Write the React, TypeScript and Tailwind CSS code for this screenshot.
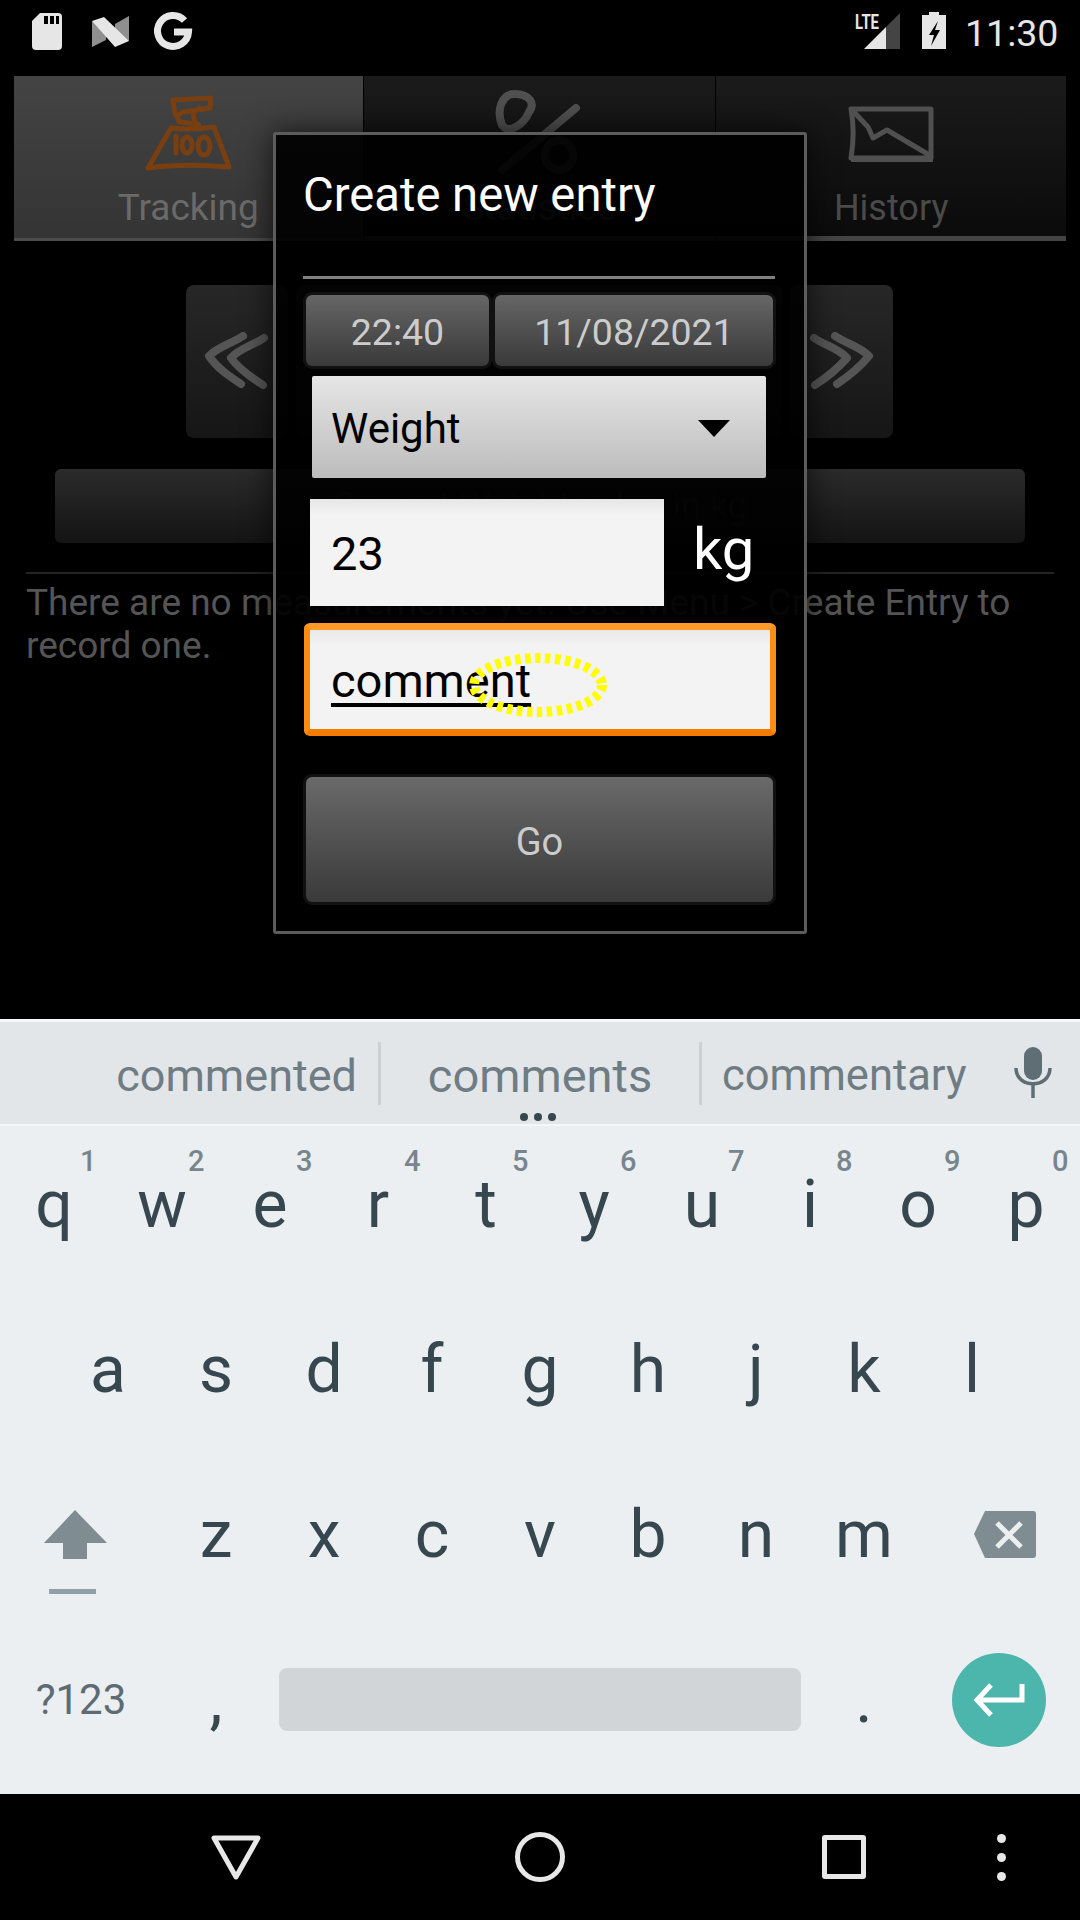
export default function App() {
  const row1 = ["q", "w", "e", "r", "t", "y", "u", "i", "o", "p"];
  const hints = ["1", "2", "3", "4", "5", "6", "7", "8", "9", "0"];
  const row2 = ["a", "s", "d", "f", "g", "h", "j", "k", "l"];
  const row3 = ["z", "x", "c", "v", "b", "n", "m"];

  return (
    <div className="relative w-[1080px] h-[1920px] bg-black overflow-hidden flex flex-col font-[Roboto,sans-serif]">
      {/* status bar */}
      <div className="h-[76px] flex shrink-0">
        <svg width="200" height="76" viewBox="0 0 200 76">
          <path d="M40 13H58a4 4 0 0 1 4 4V46a4 4 0 0 1-4 4H36a4 4 0 0 1-4-4V21Z" fill="#e6e6e6" />
          <path d="M44 16h4v8h-4zM50 16h4v8h-4zM56 16h3v8h-3z" fill="#000" />
          <path d="M92 21V47L106 40V31Z" fill="#8f8f8f" />
          <path d="M115 24L129 16V41L115 34Z" fill="#8f8f8f" />
          <path d="M92 21L104 17L129 41L115 47Z" fill="#e6e6e6" />
          <path d="M184.5 20.5A15.5 15.5 0 1 0 188.5 32H174" fill="none" stroke="#e6e6e6" strokeWidth="7" />
        </svg>
        <svg className="ml-auto" width="110" height="76" viewBox="850 0 110 76">
          <text x="855" y="29" fontSize="21" fontWeight="700" fill="#e6e6e6" textLength="24" lengthAdjust="spacingAndGlyphs">LTE</text>
          <path d="M864 49L886 27V49Z" fill="#e6e6e6" />
          <path d="M886 27L900 13V49H886Z" fill="#444" />
          <path d="M929 12H939V15H946V49H922V15H929Z" fill="#e6e6e6" />
          <path d="M938 21L929 35H934L931 46L940 30H935Z" fill="#000" />
        </svg>
        <span className="w-[120px] pl-[5px] pt-[12px] text-[37.5px] leading-[42px] text-[#e6e6e6]">11:30</span>
      </div>

      {/* tabs behind the dialog */}
      <div className="mx-[14px] h-[165px] flex shrink-0">
        <div className="w-[349px] bg-gradient-to-b from-[#444444] to-[#343434] border-b-[3px] border-[#4c4c4c] flex flex-col items-center">
          <svg className="mt-[14px]" width="95" height="85" viewBox="140 90 95 85" fill="none" stroke="#7a3f10" strokeWidth="5" strokeLinecap="round" strokeLinejoin="round">
            <path d="M172 100L210 98L209 108L182 112L176 116L178 122L197 124L199 129M172 100L174 114M198 108L192 113L194 123" />
            <path d="M170 128L147 168C175 164 205 165 228 167L213 127C200 129 185 130 170 128Z" />
            <path d="M175 136L175 153" />
            <ellipse cx="186" cy="145" rx="5" ry="8" />
            <ellipse cx="203" cy="146" rx="6" ry="9" />
          </svg>
          <span className="mt-[11px] text-[37px] leading-[44px] text-[#6a6a6a]">Tracking</span>
        </div>
        <div className="ml-[1px] w-[352px] bg-gradient-to-b from-[#1b1b1b] to-[#0b0b0b] border-b-[5px] border-[#444444] flex flex-col items-center">
          <svg className="mt-[14px]" width="95" height="85" viewBox="493 90 95 85" fill="none" stroke="#505050" strokeWidth="8" strokeLinecap="round" strokeLinejoin="round">
            <path d="M503 125C497 110 503 94 515 94C532 94 536 104 530 112C525 124 510 135 503 125Z" />
            <path d="M577 108L503 170" />
            <ellipse cx="560" cy="155" rx="14" ry="15" />
          </svg>
          <span className="mt-[11px] text-[37px] leading-[44px] text-[#4a4a4a]">Statistics</span>
        </div>
        <div className="ml-[1px] w-[350px] bg-gradient-to-b from-[#1b1b1b] to-[#0b0b0b] border-b-[5px] border-[#444444] flex flex-col items-center">
          <svg className="mt-[14px]" width="95" height="85" viewBox="844 90 95 85" fill="none" stroke="#505050" strokeWidth="5" strokeLinejoin="round">
            <path d="M851 109H931V158H851C854 140 854 125 851 109Z" />
            <path d="M853 111L868 127L873 138L887 130L931 156" />
            <path d="M851 159H933" strokeWidth="6" />
          </svg>
          <span className="mt-[11px] text-[36px] leading-[44px] text-[#4a4a4a]">History</span>
        </div>
      </div>

      {/* date navigation */}
      <div className="mt-[44px] ml-[186px] h-[153px] flex shrink-0">
        <div className="w-[102px] rounded-[8px] bg-gradient-to-b from-[#272727] to-[#161616] flex items-center justify-center">
          <svg width="72" height="60" viewBox="0 0 72 60" fill="none" stroke="#555555" strokeWidth="8" strokeLinecap="round" strokeLinejoin="round">
            <path d="M42 4C30 12 18 14 8 24C16 36 28 44 40 52" />
            <path d="M63 6C51 14 39 16 30 26C37 36 51 46 62 53" />
          </svg>
        </div>
        <div className="ml-[8px] w-[486px] rounded-[8px] bg-gradient-to-b from-[#272727] to-[#161616]" />
        <div className="ml-[8px] w-[103px] rounded-[8px] bg-gradient-to-b from-[#272727] to-[#161616] flex items-center justify-center">
          <svg width="72" height="60" viewBox="0 0 72 60" fill="none" stroke="#555555" strokeWidth="8" strokeLinecap="round" strokeLinejoin="round">
            <path d="M8 6C20 14 32 16 41 26C32 36 20 46 9 53" />
            <path d="M29 4C41 12 53 14 63 24C53 36 43 44 31 52" />
          </svg>
        </div>
      </div>

      <div className="mt-[31px] mx-[55px] h-[74px] rounded-[6px] bg-gradient-to-b from-[#2b2b2b] to-[#141414] flex items-center justify-center text-[36px] text-[#333333] shrink-0">
        Current Weight value in kg
      </div>

      <div className="mt-[29px] mx-[26px] h-[2px] bg-[#242424] shrink-0" />
      <p className="mt-[7px] mx-[26px] text-[37px] leading-[43px] text-[#555555]">
        There are no measurements yet. Use Menu &gt; Create Entry to record one.
      </p>

      {/* keyboard */}
      <div className="mt-auto shrink-0 h-[775px] flex flex-col bg-[#eceff1]">
        <div className="h-[105px] border-t-[3px] border-[#f7f8f9] bg-[#e2e6e9] relative flex items-center shrink-0">
          <span className="w-[378px] pr-[21px] pt-[6px] text-right text-[45px] text-[#6f7c83]">commented</span>
          <span className="w-[3px] h-[63px] bg-[#ccd0d3]" />
          <span className="w-[318px] pt-[6px] text-center text-[47px] text-[#6f7c83]">comments</span>
          <span className="w-[3px] h-[63px] bg-[#ccd0d3]" />
          <span className="ml-[20px] pt-[6px] text-[43.5px] text-[#6f7c83]">commentary</span>
          <svg className="ml-[46px]" width="40" height="52" viewBox="0 0 40 52" fill="none">
            <rect x="11" y="0" width="18" height="33" rx="9" fill="#5f6d75" />
            <path d="M3 21C3 42 37 42 37 21M20 36V51" stroke="#5f6d75" strokeWidth="3.5" />
          </svg>
          <div className="absolute left-[520px] bottom-[3px] flex gap-[6px]">
            <span className="w-[8px] h-[8px] rounded-full bg-[#37474f]" />
            <span className="w-[8px] h-[8px] rounded-full bg-[#37474f]" />
            <span className="w-[8px] h-[8px] rounded-full bg-[#37474f]" />
          </div>
        </div>
        <div className="h-[3px] -mt-[1px] bg-[#f4f6f7] shrink-0" />
        <div className="-mt-[4px] flex-1 flex flex-col text-[#37474f] text-[66px]">
          <div className="h-[165px] flex">
            {row1.map((k, i) => (
              <div key={k} className="relative w-[108px] flex items-center justify-center">
                {k}
                <span className="absolute left-[80px] top-[22px] text-[29px] leading-[34px] font-medium text-[#78858c]">{hints[i]}</span>
              </div>
            ))}
          </div>
          <div className="h-[165px] flex pl-[54px]">
            {row2.map((k) => (
              <div key={k} className="w-[108px] flex items-center justify-center">{k}</div>
            ))}
          </div>
          <div className="h-[165px] flex">
            <div className="w-[162px] flex items-start">
              <svg className="ml-[30px] mt-[58px]" width="120" height="100" viewBox="30 1510 120 100">
                <path d="M75 1510L107 1543H87V1559H63V1543H44Z" fill="#7f8c91" />
                <path d="M49 1589H96V1594H49Z" fill="#90a0a8" />
              </svg>
            </div>
            {row3.map((k) => (
              <div key={k} className="w-[108px] flex items-center justify-center">{k}</div>
            ))}
            <div className="w-[162px] flex items-center pl-[56px]">
              <svg width="62" height="47" viewBox="974 1511 62 47">
                <path d="M985 1511H1033a3 3 0 0 1 3 3V1555a3 3 0 0 1-3 3H985L974 1534Z" fill="#7f8c91" />
                <path d="M997 1523L1021 1547M1021 1523L997 1547" stroke="#eceff1" strokeWidth="5" />
              </svg>
            </div>
          </div>
          <div className="h-[165px] flex items-center">
            <div className="w-[162px] text-center text-[42px] text-[#5d6c74]">?123</div>
            <div className="w-[108px] text-center">,</div>
            <div className="w-[540px] px-[9px]">
              <div className="h-[63px] rounded-[8px] bg-[#d1d5d8]" />
            </div>
            <div className="w-[108px] text-center">.</div>
            <div className="w-[162px] flex justify-center">
              <div className="w-[94px] h-[94px] rounded-full bg-[#4db6ac] flex items-center justify-center">
                <svg width="56" height="36" viewBox="0 0 56 36" fill="none" stroke="#ffffff" strokeWidth="5">
                  <path d="M51 2V18H6M20 3L6 18L20 33" />
                </svg>
              </div>
            </div>
          </div>
        </div>
      </div>

      {/* navigation bar */}
      <div className="h-[126px] bg-black shrink-0 flex items-center">
        <svg className="ml-[208px]" width="56" height="50" viewBox="208 1832 56 50" fill="none" stroke="#e8e8e8" strokeWidth="5" strokeLinejoin="round">
          <path d="M214 1838H258L236 1877Z" />
        </svg>
        <svg className="ml-[248px]" width="56" height="56" viewBox="0 0 56 56" fill="none" stroke="#e8e8e8" strokeWidth="5">
          <circle cx="28" cy="28" r="22.5" />
        </svg>
        <div className="ml-[254px] w-[44px] h-[44px] border-[5px] border-[#e8e8e8] rounded-[3px]" />
        <div className="ml-[131px] flex flex-col gap-[10px]">
          <span className="w-[9px] h-[9px] rounded-full bg-[#e8e8e8]" />
          <span className="w-[9px] h-[9px] rounded-full bg-[#e8e8e8]" />
          <span className="w-[9px] h-[9px] rounded-full bg-[#e8e8e8]" />
        </div>
      </div>

      {/* dialog */}
      <div className="absolute left-[273px] top-[132px] w-[534px] h-[802px] bg-black/[0.92] border-[3px] border-[#5c5c5c] rounded-[3px] shadow-[0_0_30px_rgba(0,0,0,0.7)] flex flex-col">
        <h1 className="mt-[37px] ml-[27px] text-[47.2px] leading-[46px] text-white">Create new entry</h1>
        <div className="mt-[58px] ml-[27px] w-[472px] h-[3px] bg-[#808080]" />
        <div className="mt-[16px] ml-[30px] flex gap-[6px] text-[37.5px] text-[#cccccc]">
          <div className="w-[183px] h-[71px] pt-[4px] rounded-[6px] bg-gradient-to-b from-[#666666] to-[#3a3a3a] flex items-center justify-center ring-[3px] ring-[#111111]">22:40</div>
          <div className="w-[278px] h-[71px] pt-[4px] rounded-[6px] bg-gradient-to-b from-[#666666] to-[#3a3a3a] flex items-center justify-center ring-[3px] ring-[#111111]">11/08/2021</div>
        </div>
        <div className="mt-[10px] ml-[36px] w-[454px] h-[102px] pt-[2px] bg-gradient-to-b from-[#e6e6e6] to-[#bcbcbc] flex items-center justify-between pl-[19px] pr-[36px] text-[42px] text-black rounded-[2px]">
          Weight
          <svg width="32" height="17" viewBox="0 0 32 17"><path d="M0 0H32L16 17Z" fill="#000" /></svg>
        </div>
        <div className="mt-[21px] ml-[34px] flex items-center">
          <div className="w-[354px] h-[107px] pt-[4px] bg-gradient-to-b from-[#e6e6e6] to-[#f3f3f3] to-[15%] flex items-center pl-[21px] text-[47px] text-black">23</div>
          <span className="ml-[29px] text-[58px] leading-[58px] pb-[8px] text-white">kg</span>
        </div>
        <div className="relative mt-[17px] ml-[28px] w-[472px] h-[113px] pt-[4px] rounded-[6px] border-x-[6px] border-t-[7px] border-b-[7px] border-t-[#ff9a2a] border-b-[#f57c00] border-x-[#fb8c14] bg-gradient-to-b from-[#e8e8e8] to-[#f3f3f3] to-[15%] flex items-center pl-[21px] text-[47px] text-black">
          <span className="underline decoration-[4px] underline-offset-[6px]">comment</span>
          <svg className="absolute left-[155px] top-[19px]" width="146" height="72" viewBox="0 0 146 72" fill="none">
            <ellipse cx="73" cy="36" rx="64" ry="27" stroke="#ffff00" strokeWidth="10" strokeDasharray="5.5 4.5" />
          </svg>
        </div>
        <div className="mt-[41px] ml-[30px] w-[467px] h-[125px] pt-[5px] rounded-[6px] bg-gradient-to-b from-[#6a6a6a] to-[#3a3a3a] flex items-center justify-center text-[38px] text-[#cccccc] ring-[3px] ring-[#111111]">Go</div>
      </div>
    </div>
  );
}
